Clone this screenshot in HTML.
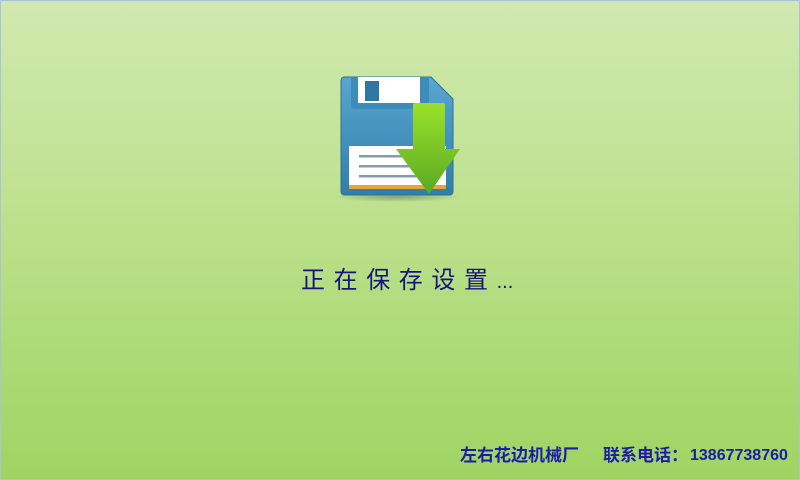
<!DOCTYPE html>
<html><head><meta charset="utf-8">
<style>
html,body{margin:0;padding:0;}
body{width:800px;height:480px;overflow:hidden;position:relative;
background:linear-gradient(to bottom,#d1e9b0 0%,#bfe291 40%,#9fd462 100%);
box-sizing:border-box;border:1px solid #a9c3d8;}
.msg{position:absolute;left:300px;top:265px;font-family:"Liberation Sans","Noto Sans CJK SC",sans-serif;
font-size:24px;color:#14147a;line-height:30px;white-space:nowrap;}
.msg span{letter-spacing:8.6px;}
.msg b{font-weight:normal;font-size:20px;letter-spacing:0;}
.f{position:absolute;top:444px;font-family:"Liberation Sans","Noto Sans CJK SC",sans-serif;
font-size:17px;color:#1c1ca8;line-height:22px;white-space:nowrap;font-weight:bold;}
svg{position:absolute;left:330px;top:70px;}
</style></head><body>
<svg width="140" height="135" viewBox="330 70 140 135">
<defs>
<linearGradient id="dk" x1="0" y1="0" x2="0" y2="1"><stop offset="0" stop-color="#5aa6d0"/><stop offset="1" stop-color="#2f7eaa"/></linearGradient>
<linearGradient id="ar" x1="0" y1="0" x2="0" y2="1"><stop offset="0" stop-color="#9be12a"/><stop offset="1" stop-color="#5aaa22"/></linearGradient>
<radialGradient id="sh" cx="0.5" cy="0.5" r="0.5"><stop offset="0" stop-color="#6a7a60" stop-opacity="0.6"/><stop offset="1" stop-color="#6a7a60" stop-opacity="0"/></radialGradient>
</defs>
<ellipse cx="396" cy="196" rx="64" ry="5" fill="url(#sh)"/>
<path d="M344 76 H430 L452 98 V190 Q452 194 448 194 H344 Q340 194 340 190 V80 Q340 76 344 76 Z" fill="url(#dk)" stroke="#2a6f98" stroke-width="1"/>
<path d="M350 76 H428 V104 Q428 108 424 108 H354 Q350 108 350 104 Z" fill="#3d8dbb"/>
<rect x="357" y="76" width="62" height="26" fill="#ffffff"/>
<rect x="364" y="80" width="14" height="20" fill="#2e77a3"/>
<path d="M348 145 H445 V188 H348 Z" fill="#ffffff"/>
<rect x="348" y="184" width="97" height="4" fill="#e8a33c"/>
<rect x="358" y="154" width="78" height="2.5" fill="#8a9aae"/>
<rect x="358" y="164" width="78" height="2.5" fill="#8a9aae"/>
<rect x="358" y="174" width="78" height="2.5" fill="#8a9aae"/>
<path d="M414 102 H442 Q444 102 444 104 V148 H459 L428 193 L395 148 H412 V104 Q412 102 414 102 Z" fill="url(#ar)"/>
</svg>
<div class="msg"><span>正在保存设置</span><b>...</b></div>
<div class="f" style="left:459px">左右花边机械厂</div>
<div class="f" style="left:602px">联系电话：</div>
<div class="f" style="left:689px;font-size:16px">13867738760</div>
</body></html>
